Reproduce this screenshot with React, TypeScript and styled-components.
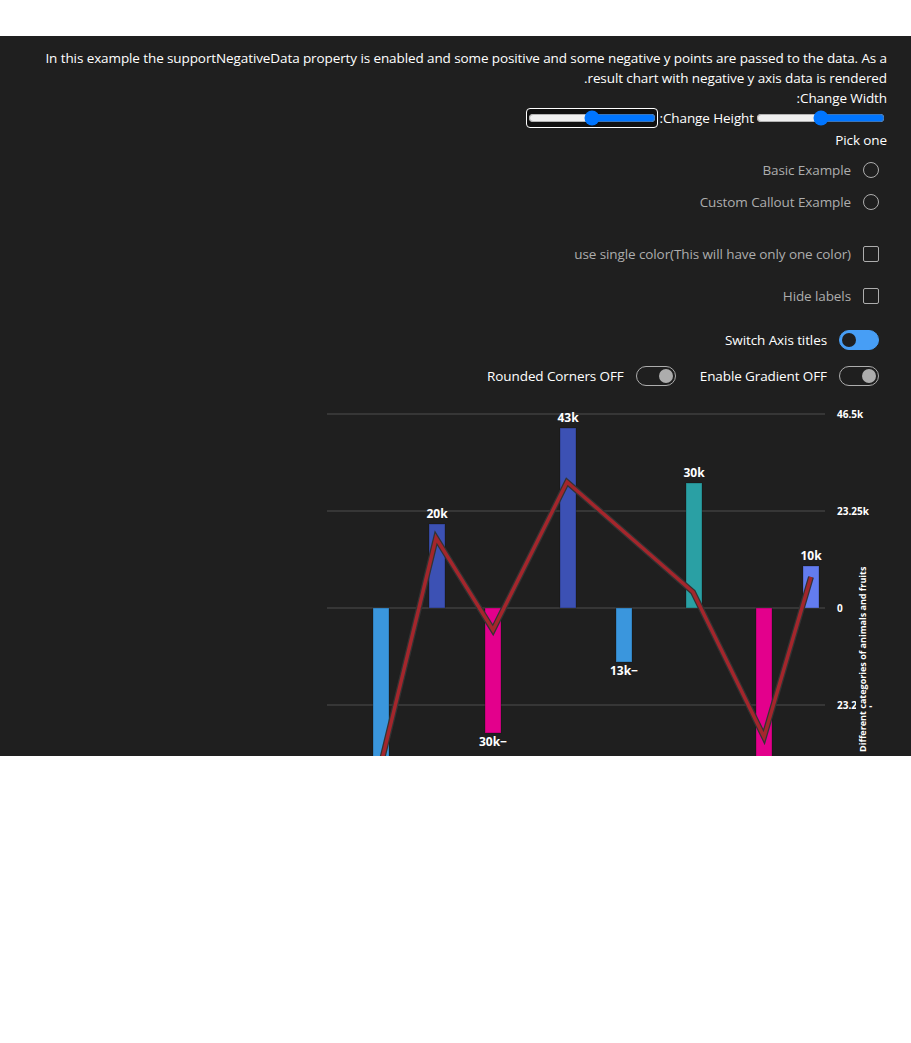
import React from "react";
import styled, { createGlobalStyle } from "styled-components";

const GlobalStyle = createGlobalStyle`
  body {
    margin: 0;
    background: #ffffff;
    font-family: "Open Sans", "Noto Sans", sans-serif;
  }
`;

const Page = styled.div`
  padding-top: 36px;
`;

const Panel = styled.div`
  direction: rtl;
  height: 720px;
  overflow: hidden;
  box-sizing: border-box;
  padding: 12px 24px 0;
  background: #1f1f1f;
  color: #ffffff;
  font-size: 13.5px;
  letter-spacing: -0.1px;
  line-height: 20px;
`;

const Description = styled.p`
  margin: 0;
`;

const FieldLabel = styled.div`
  height: 20px;
`;

const SliderRow = styled.div`
  display: flex;
  align-items: center;
  height: 20px;
`;

const Range = styled.input`
  width: 129px;
  height: 16px;
  margin: 0 2px;
`;

const FocusRing = styled.span`
  display: inline-flex;
  align-items: center;
  margin-right: 2px;
  border: 1px solid #ffffff;
  border-radius: 4px;
  background: #101010;
  padding: 1px;

  input {
    margin: 0;
    width: 128px;
  }
`;

const Heading = styled.div`
  height: 20px;
  margin-top: 2px;
`;

const OptionRow = styled.label<{ $top: number }>`
  display: flex;
  align-items: center;
  gap: 12px;
  height: 32px;
  padding: 0 8px;
  margin-top: ${(p) => p.$top}px;
  color: #adadad;
`;

const RadioCircle = styled.span`
  width: 16px;
  height: 16px;
  box-sizing: border-box;
  border: 1px solid #adadad;
  border-radius: 50%;
`;

const CheckBox = styled.span`
  width: 16px;
  height: 16px;
  box-sizing: border-box;
  border: 1px solid #adadad;
  border-radius: 2px;
`;

const SwitchLine = styled.div<{ $top: number }>`
  display: flex;
  align-items: center;
  gap: 8px;
  height: 32px;
  margin-top: ${(p) => p.$top}px;
`;

const SwitchItem = styled.label`
  display: flex;
  align-items: center;
  gap: 12px;
  padding: 0 8px;
  color: #ffffff;
`;

const Track = styled.span<{ $on: boolean }>`
  display: flex;
  align-items: center;
  justify-content: ${(p) => (p.$on ? "flex-end" : "flex-start")};
  width: 40px;
  height: 20px;
  box-sizing: border-box;
  padding: 0 2px;
  border-radius: 10px;
  border: 1px solid ${(p) => (p.$on ? "#479ef5" : "#adadad")};
  background: ${(p) => (p.$on ? "#479ef5" : "transparent")};
`;

const Thumb = styled.span<{ $on: boolean }>`
  width: 14px;
  height: 14px;
  border-radius: 50%;
  background: ${(p) => (p.$on ? "#1f1f1f" : "#adadad")};
`;

const ChartBox = styled.div`
  direction: ltr;
  letter-spacing: 0;
  margin: 4px -24px 0;

  svg {
    display: block;
  }
`;

const Toggle = ({ label, on }: { label: string; on: boolean }) => (
  <SwitchItem>
    <Track $on={on}>
      <Thumb $on={on} />
    </Track>
    {label}
  </SwitchItem>
);

const grid = [414, 511, 608, 705];

const bars = [
  { x: 373, top: 608, bottom: 800, color: "#3a96dd" },
  { x: 429, top: 524, bottom: 608, color: "#3c51b4", label: "20k" },
  { x: 485, top: 608, bottom: 733, color: "#e3008c", label: "30k−" },
  { x: 560, top: 428, bottom: 608, color: "#3c51b4", label: "43k" },
  { x: 616, top: 608, bottom: 662, color: "#3a96dd", label: "13k−" },
  { x: 686, top: 483, bottom: 608, color: "#2aa0a4", label: "30k" },
  { x: 756, top: 608, bottom: 800, color: "#e3008c" },
  { x: 803, top: 566, bottom: 608, color: "#637cef", label: "10k" },
];

const linePoints = "380.5,766 436,538 493,630 567,482 693,592 764,737 811,577";

function Chart() {
  return (
    <ChartBox>
      <svg width={911} height={364} viewBox="0 396 911 364">
        <defs>
          <clipPath id="tickClip">
            <rect x={830} y={690} width={26} height={30} />
          </clipPath>
        </defs>
        {grid.map((y) => (
          <line key={y} x1={327} x2={825} y1={y} y2={y} stroke="#4f4f4f" strokeWidth={1} />
        ))}
        {bars.map((b) => {
          const neg = b.top === 608;
          return (
            <g key={b.x}>
              <rect
                x={b.x}
                y={b.top}
                width={16}
                height={b.bottom - b.top}
                fill={b.color}
                stroke="rgba(0,0,0,0.25)"
                strokeWidth={1}
              />
              {b.label && (
                <text
                  x={b.x + 8}
                  y={neg ? b.bottom + 13 : b.top - 6}
                  fill="#ffffff"
                  fontSize={12}
                  fontWeight={700}
                  textAnchor="middle"
                  fontFamily="'Open Sans', sans-serif"
                >
                  {b.label}
                </text>
              )}
            </g>
          );
        })}
        <polyline points={linePoints} fill="none" stroke="#333333" strokeWidth={6} strokeLinejoin="miter" />
        <polyline points={linePoints} fill="none" stroke="#a4262c" strokeWidth={3.5} strokeLinejoin="miter" />
        <g fill="#ffffff" fontSize={10} fontWeight={700} fontFamily="'Open Sans', sans-serif">
          <text x={837} y={418}>46.5k</text>
          <text x={837} y={515}>23.25k</text>
          <text x={837} y={612}>0</text>
          <text x={837} y={709} clipPath="url(#tickClip)">23.25k</text>
          <text x={869} y={709}>-</text>
          <text x={866} y={752} fontSize={9} transform="rotate(-90 866 752)">
            Different categories of animals and fruits
          </text>
        </g>
      </svg>
    </ChartBox>
  );
}

export default function App() {
  return (
    <Page>
      <GlobalStyle />
      <Panel>
        <Description>
          In this example the supportNegativeData property is enabled and some positive and some
          negative y points are passed to the data. As a result chart with negative y axis data is
          rendered.
        </Description>
        <FieldLabel>Change Width:</FieldLabel>
        <SliderRow>
          <Range type="range" min={0} max={100} defaultValue={50} />
          <span>Change Height:</span>
          <FocusRing>
            <input type="range" min={0} max={100} defaultValue={50} />
          </FocusRing>
        </SliderRow>
        <Heading>Pick one</Heading>
        <OptionRow $top={4}>
          <RadioCircle />
          Basic Example
        </OptionRow>
        <OptionRow $top={0}>
          <RadioCircle />
          Custom Callout Example
        </OptionRow>
        <OptionRow $top={20}>
          <CheckBox />
          use single color(This will have only one color)
        </OptionRow>
        <OptionRow $top={10}>
          <CheckBox />
          Hide labels
        </OptionRow>
        <SwitchLine $top={12}>
          <Toggle label="Switch Axis titles" on />
        </SwitchLine>
        <SwitchLine $top={4}>
          <Toggle label="Enable Gradient OFF" on={false} />
          <Toggle label="Rounded Corners OFF" on={false} />
        </SwitchLine>
        <Chart />
      </Panel>
    </Page>
  );
}
